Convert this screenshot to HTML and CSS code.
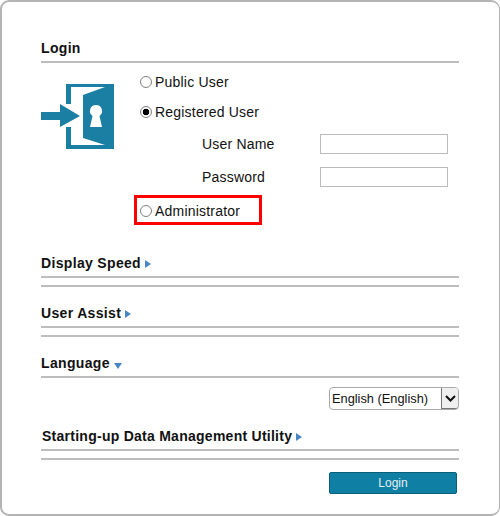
FILE: index.html
```html
<!DOCTYPE html>
<html lang="en">
<head>
<meta charset="utf-8">
<title>Login</title>
<link rel="stylesheet" href="styles.css">
</head>
<body>
<main class="panel">
  <section class="section login-section">
    <h2 class="heading">Login</h2>
    <div class="login-body">
      <svg class="door-icon" width="73" height="66" viewBox="0 0 73 66" aria-hidden="true">
        <path fill="#1b7fa3" d="M25 0H73V65H25V43H30V61H64L42 54V11L64 3H30V20H25Z"/>
        <path fill="#fff" d="M55 21a6 6 0 0 1 3.500 10.900L61 43H49L51.500 31.900A6 6 0 0 1 55 21Z"/>
        <path fill="#1b7fa3" d="M0 28H19V20L39 32L19 43V36H0Z"/>
      </svg>
      <div class="options">
        <label class="radio-row"><input class="radio" type="radio" name="user"><span>Public User</span></label>
        <label class="radio-row"><input class="radio" type="radio" name="user" checked><span>Registered User</span></label>
        <div class="field"><label class="field-label" for="un">User Name</label><input class="text-input" id="un" type="text"></div>
        <div class="field"><label class="field-label" for="pw">Password</label><input class="text-input" id="pw" type="password"></div>
        <label class="radio-row admin"><input class="radio" type="radio" name="user"><span>Administrator</span></label>
      </div>
    </div>
  </section>

  <section class="section speed">
    <h2 class="heading">Display Speed <span class="arrow right"></span></h2>
    <div class="rule"></div>
  </section>

  <section class="section assist">
    <h2 class="heading">User Assist <span class="arrow right"></span></h2>
    <div class="rule"></div>
  </section>

  <section class="section language">
    <h2 class="heading">Language <span class="arrow down"></span></h2>
    <div class="select-row">
      <div class="select"><span class="select-value">English (English)</span><span class="select-btn"><svg width="11" height="7" viewBox="0 0 11 7" aria-hidden="true"><path d="M1 1L5.500 5.500L10 1" fill="none" stroke="#111" stroke-width="2"/></svg></span></div>
    </div>
  </section>

  <section class="section utility">
    <h2 class="heading indent">Starting-up Data Management Utility <span class="arrow right"></span></h2>
    <div class="rule"></div>
  </section>

  <div class="actions"><button class="login-btn" type="button">Login</button></div>
</main>
</body>
</html>
```
FILE: styles.css
```css
* , *::before { box-sizing: border-box; }
html, body { margin: 0; padding: 0; background: #fff; }
body { width: 500px; height: 516px; overflow: hidden; font-family: "Liberation Sans", Arial, sans-serif; color: #111; }
.panel {
  width: 500px; height: 516px;
  border: 2px solid #b4b4b4; border-right-width: 1px;
  border-radius: 9px;
  padding: 0 40px 0 39px;
}
.heading {
  margin: 0; padding: 0 0 5px;
  font-size: 14px; line-height: 16px; font-weight: 700; letter-spacing: 0.33px;
  border-bottom: 2px solid #bdbdbd;
  height: 23px;
}
.heading.indent { padding-left: 1px; letter-spacing: 0.26px; }
.rule { height: 2px; background: #bdbdbd; margin-top: 7px; }
.login-section { padding-top: 38px; }
.login-body { display: flex; padding-top: 21px; }
.door-icon { flex: none; display: block; }
.options { margin-left: 27px; margin-top: -12px; font-size: 14px; }
.radio-row { display: flex; align-items: center; height: 20px; letter-spacing: 0.2px; }
.radio-row + .radio-row { margin-top: 10px; }
.radio {
  appearance: none; margin: 0 3px 0 -1px; width: 12px; height: 12px; flex: none;
  border: 1px solid #808080; border-radius: 50%; background: #fff;
}
.radio:checked { background: radial-gradient(circle, #000 0, #000 3px, #fff 3.600px); }
.field { display: flex; align-items: center; height: 22px; margin-top: 11px; padding-left: 61px; letter-spacing: 0.2px; }
.field-label { width: 118px; }
.text-input { width: 128px; height: 20px; border: 1px solid #bbb; background: #fff; padding: 0; }
.admin {
  position: relative; margin-top: 13px !important;
}
.admin::before {
  content: ""; position: absolute; left: -7px; top: -6px; width: 128px; height: 30px;
  border: 3px solid #f00;
}
.speed { margin-top: 34px; }
.assist { margin-top: 18px; }
.language { margin-top: 18px; }
.utility { margin-top: 18px; }
.arrow { display: inline-block; vertical-align: 0; }
.arrow.right { border-left: 6px solid #4a86c5; border-top: 4px solid transparent; border-bottom: 4px solid transparent; }
.arrow.down { border-top: 6px solid #4a86c5; border-left: 4.500px solid transparent; border-right: 4.500px solid transparent; vertical-align: -1px; }
.select-row { display: flex; justify-content: flex-end; padding-top: 9px; }
.select {
  width: 130px; height: 23px; display: flex; align-items: center; justify-content: space-between;
  border: 1px solid #a9a9a9; border-radius: 4px; font-size: 12.800px; padding-left: 2px; background: #fff;
}
.select-btn {
  width: 17px; height: 21px; display: flex; align-items: center; justify-content: center;
  background: #efefef; border-left: 1px solid #777; border-bottom: 1px solid #777; border-radius: 0 3px 3px 0;
}
.actions { margin-top: 12px; padding-left: 288px; }
.login-btn {
  display: block; width: 128px; height: 22px; padding: 0;
  background: #0f7fa3; border: 1px solid #0a5f7c; border-radius: 2px;
  color: #e4f0f4; font: 12px/18px "Liberation Sans", Arial, sans-serif;
}
```
